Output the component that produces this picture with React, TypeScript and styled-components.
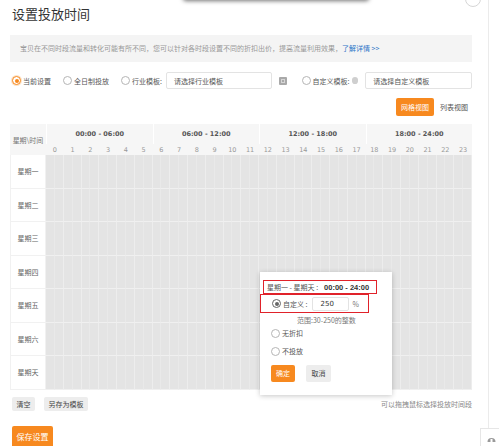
import styled, { createGlobalStyle } from "styled-components";

const GlobalStyle = createGlobalStyle`
    html, body {
        margin: 0;
        padding: 0;
        background: #fff;
        font-family: "Noto Sans CJK SC", "Noto Sans", sans-serif;
        color: #333;
    }
`;

const ORANGE = "#f7891f";
const DAYS = ["星期一", "星期二", "星期三", "星期四", "星期五", "星期六", "星期天"];
const RANGES = ["00:00 - 06:00", "06:00 - 12:00", "12:00 - 18:00", "18:00 - 24:00"];

const Shell = styled.div`
    position: relative;
    width: 499px;
    height: 446px;
    overflow: hidden;
`;

const Page = styled.div`
    position: relative;
    box-sizing: border-box;
    width: 489px;
    height: 446px;
    padding: 0 16px 0 10px;
    border-right: 1px solid #ebebeb;
`;

const TopShadow = styled.div`
    position: absolute;
    left: 183px;
    top: -22px;
    width: 186px;
    height: 22px;
    background: #fff;
    border-radius: 3px;
    box-shadow: 0 1px 4px rgba(0, 0, 0, 0.55);
`;

const TopCircle = styled.div`
    position: absolute;
    left: 465px;
    top: -9px;
    width: 14px;
    height: 14px;
    border: 1px solid #d6d6d6;
    border-radius: 50%;
`;

const Title = styled.h1`
    margin: 0;
    padding-left: 2px;
    height: 26px;
    line-height: 28px;
    font-size: 13px;
    font-weight: normal;
    color: #333;
`;

const Notice = styled.div`
    margin-top: 9px;
    height: 27px;
    line-height: 27px;
    padding-left: 10px;
    background: #f4f4f4;
    font-size: 7px;
    color: #999;
`;

const Link = styled.a`
    color: #2f74c8;
    text-decoration: none;
`;

const OptionRow = styled.div`
    display: flex;
    align-items: center;
    margin-top: 10px;
    height: 17px;
    font-size: 7px;
    color: #555;
`;

const Option = styled.label<{ $ml?: number }>`
    display: inline-flex;
    align-items: center;
    gap: 2px;
    margin-left: ${(p) => p.$ml ?? 0}px;
    white-space: nowrap;
`;

const Radio = styled.span<{ $checked?: boolean; $tone?: string }>`
    position: relative;
    box-sizing: border-box;
    width: 9px;
    height: 9px;
    border-radius: 50%;
    border: 1px solid ${(p) => (p.$checked ? p.$tone ?? ORANGE : "#b5b5b5")};
    background: #fff;
    box-shadow: ${(p) => (p.$checked && !p.$tone ? "0 0 0 1px #fde3c8" : "none")};

    &::after {
        content: "";
        display: ${(p) => (p.$checked ? "block" : "none")};
        position: absolute;
        left: 1.5px;
        top: 1.5px;
        width: 4px;
        height: 4px;
        border-radius: 50%;
        background: ${(p) => p.$tone ?? ORANGE};
    }
`;

const Select = styled.div<{ $ml?: number; $w: number }>`
    box-sizing: border-box;
    width: ${(p) => p.$w}px;
    height: 17px;
    margin-left: ${(p) => p.$ml ?? 0}px;
    padding-left: 7px;
    line-height: 16px;
    border: 1px solid #e3e3e3;
    border-radius: 2px;
    font-size: 7px;
    color: #555;
`;

const TemplateIcon = styled.span`
    display: inline-block;
    box-sizing: border-box;
    width: 8px;
    height: 8px;
    margin-left: 7px;
    border-radius: 1px;
    background: #a9a9a9;
    border: 2px solid #a9a9a9;
    box-shadow: inset 0 0 0 1px #d6d6d6;
`;

const HelpDot = styled.span`
    display: inline-block;
    width: 7px;
    height: 7px;
    margin-left: 2px;
    border-radius: 50%;
    background: #cfcfcf;
`;

const ViewBar = styled.div`
    display: flex;
    justify-content: flex-end;
    gap: 2px;
    margin-top: 9px;
    height: 18px;
`;

const ViewButton = styled.div<{ $active?: boolean; $w: number }>`
    box-sizing: border-box;
    width: ${(p) => p.$w}px;
    height: 18px;
    line-height: 18px;
    text-align: center;
    font-size: 7px;
    border-radius: 2px;
    background: ${(p) => (p.$active ? ORANGE : "#fff")};
    color: ${(p) => (p.$active ? "#fff" : "#555")};
`;

const TableWrap = styled.div`
    position: relative;
    margin-top: 8px;
`;

const Table = styled.div`
    display: grid;
    grid-template-columns: 36px repeat(48, 1fr);
    grid-template-rows: 20px 11px repeat(7, 33.5px);
`;

const CornerCell = styled.div`
    grid-row: 1 / span 2;
    display: flex;
    align-items: center;
    justify-content: center;
    background: #f6f6f6;
    font-size: 7px;
    color: #777;
`;

const RangeCell = styled.div`
    grid-column: span 12;
    display: flex;
    align-items: center;
    justify-content: center;
    background: #f6f6f6;
    border-left: 1px solid #fff;
    font-family: "DejaVu Sans", sans-serif;
    font-size: 6.5px;
    font-weight: bold;
    color: #555;
`;

const HourCell = styled.div`
    grid-column: span 2;
    display: flex;
    align-items: center;
    justify-content: center;
    background: #f6f6f6;
    font-family: "DejaVu Sans", sans-serif;
    font-size: 6.5px;
    color: #999;
`;

const DayCell = styled.div`
    display: flex;
    align-items: center;
    justify-content: center;
    box-sizing: border-box;
    border-left: 1px solid #f1f1f1;
    border-right: 1px solid #f1f1f1;
    border-bottom: 1px solid #f1f1f1;
    font-size: 7px;
    color: #666;
`;

const SlotCell = styled.div<{ $hourEnd: boolean }>`
    box-sizing: border-box;
    background: #e4e4e4;
    border-right: 1px solid ${(p) => (p.$hourEnd ? "#ededed" : "#e9e9e9")};
    border-bottom: 1px solid #f0f0f0;
`;

const Popup = styled.div`
    position: absolute;
    left: 250px;
    top: 148px;
    box-sizing: border-box;
    width: 132px;
    height: 123px;
    padding-top: 8px;
    background: #fff;
    box-shadow: 0 1px 5px rgba(0, 0, 0, 0.22);
    font-size: 7px;
    color: #555;
`;

const Highlight = styled.div<{ $w: number; $h: number; $ml: number; $pl: number }>`
    box-sizing: border-box;
    display: flex;
    align-items: center;
    width: ${(p) => p.$w}px;
    height: ${(p) => p.$h}px;
    margin-left: ${(p) => p.$ml}px;
    padding-left: ${(p) => p.$pl}px;
    border: 1.5px solid #e0222a;
    white-space: nowrap;
`;

const Strong = styled.span`
    margin-left: 6px;
    font-family: "Liberation Sans", sans-serif;
    font-size: 7.5px;
    font-weight: bold;
    color: #333;
`;

const RateInput = styled.div`
    box-sizing: border-box;
    width: 37px;
    height: 14px;
    margin-left: 4px;
    padding-left: 8px;
    line-height: 13px;
    border: 1px solid #e3e3e3;
    border-radius: 2px;
    font-family: "DejaVu Sans", sans-serif;
    color: #333;
`;

const Percent = styled.span`
    margin-left: 4px;
    color: #777;
`;

const Hint = styled.div`
    margin: 2px 0 0 37px;
    height: 10px;
    line-height: 10px;
    color: #777;
`;

const PopupOption = styled.div<{ $mt: number }>`
    display: flex;
    align-items: center;
    gap: 2px;
    margin: ${(p) => p.$mt}px 0 0 11px;
    height: 10px;
`;

const PopupActions = styled.div`
    display: flex;
    gap: 11px;
    margin: 9px 0 0 11px;
`;

const SmallButton = styled.div<{ $primary?: boolean; $w: number; $h: number }>`
    width: ${(p) => p.$w}px;
    height: ${(p) => p.$h}px;
    line-height: ${(p) => p.$h}px;
    text-align: center;
    border-radius: 2px;
    background: ${(p) => (p.$primary ? ORANGE : "#ededed")};
    color: ${(p) => (p.$primary ? "#fff" : "#444")};
    font-size: 7px;
`;

const Footer = styled.div`
    display: flex;
    align-items: center;
    gap: 9px;
    margin-top: 7px;
    height: 14px;
    padding-left: 2px;
`;

const FooterTip = styled.span`
    margin-left: auto;
    font-size: 7px;
    color: #888;
`;

const SaveButton = styled.div`
    width: 41px;
    height: 22px;
    margin: 15px 0 0 2px;
    line-height: 21px;
    text-align: center;
    border-radius: 2px;
    background: ${ORANGE};
    color: #fff;
    font-size: 8px;
`;

const ServiceWidget = styled.div`
    position: absolute;
    left: 480px;
    top: 428px;
    box-sizing: border-box;
    width: 22px;
    height: 22px;
    display: flex;
    justify-content: center;
    padding-top: 6px;
    background: #fff;
    border: 1px solid #e6e6e6;
`;

export default function App() {
    return (
        <Shell>
            <GlobalStyle />
            <Page>
                <TopShadow />
                <TopCircle />
                <Title>设置投放时间</Title>
                <Notice>
                    宝贝在不同时段流量和转化可能有所不同，您可以针对各时段设置不同的折扣出价，提高流量利用效果，
                    <Link>了解详情 &gt;&gt;</Link>
                </Notice>

                <OptionRow>
                    <Option $ml={2}>
                        <Radio $checked />
                        当前设置
                    </Option>
                    <Option $ml={12}>
                        <Radio />
                        全日制投放
                    </Option>
                    <Option $ml={12}>
                        <Radio />
                        行业模板:
                    </Option>
                    <Select $ml={4} $w={108}>请选择行业模板</Select>
                    <TemplateIcon />
                    <Option $ml={15}>
                        <Radio />
                        自定义模板:
                    </Option>
                    <HelpDot />
                    <Select $ml={7} $w={109}>请选择自定义模板</Select>
                </OptionRow>

                <ViewBar>
                    <ViewButton $active $w={38}>网格视图</ViewButton>
                    <ViewButton $w={36}>列表视图</ViewButton>
                </ViewBar>

                <TableWrap>
                    <Table>
                        <CornerCell>星期\时间</CornerCell>
                        {RANGES.map((r) => (
                            <RangeCell key={r}>{r}</RangeCell>
                        ))}
                        {Array.from({ length: 24 }, (_, h) => (
                            <HourCell key={h}>{h}</HourCell>
                        ))}
                        {DAYS.map((day) => [
                            <DayCell key={day}>{day}</DayCell>,
                            ...Array.from({ length: 48 }, (_, i) => (
                                <SlotCell key={day + i} $hourEnd={i % 2 === 1} />
                            )),
                        ])}
                    </Table>

                    <Popup>
                        <Highlight $w={114} $h={14} $ml={3} $pl={3}>
                            星期一 - 星期天 :<Strong>00:00 - 24:00</Strong>
                        </Highlight>
                        <Highlight $w={109} $h={19} $ml={0} $pl={11}>
                            <Radio $checked $tone="#666" />
                            <span style={{ marginLeft: 2 }}>自定义 :</span>
                            <RateInput>250</RateInput>
                            <Percent>%</Percent>
                        </Highlight>
                        <Hint>范围:30-250的整数</Hint>
                        <PopupOption $mt={3}>
                            <Radio />
                            无折扣
                        </PopupOption>
                        <PopupOption $mt={8}>
                            <Radio />
                            不投放
                        </PopupOption>
                        <PopupActions>
                            <SmallButton $primary $w={24} $h={17}>确定</SmallButton>
                            <SmallButton $w={25} $h={17}>取消</SmallButton>
                        </PopupActions>
                    </Popup>
                </TableWrap>

                <Footer>
                    <SmallButton $w={23} $h={14}>清空</SmallButton>
                    <SmallButton $w={44} $h={14}>另存为模板</SmallButton>
                    <FooterTip>可以拖拽鼠标选择投放时间段</FooterTip>
                </Footer>

                <SaveButton>保存设置</SaveButton>
            </Page>

            <ServiceWidget>
                <svg width="9" height="7" viewBox="0 0 9 7">
                    <path d="M0.5 7 A4 4 0 0 1 8.5 7 Z" fill="#9a9a9a" />
                    <rect x="3.5" y="4" width="2" height="3" fill="#fff" />
                </svg>
            </ServiceWidget>
        </Shell>
    );
}
